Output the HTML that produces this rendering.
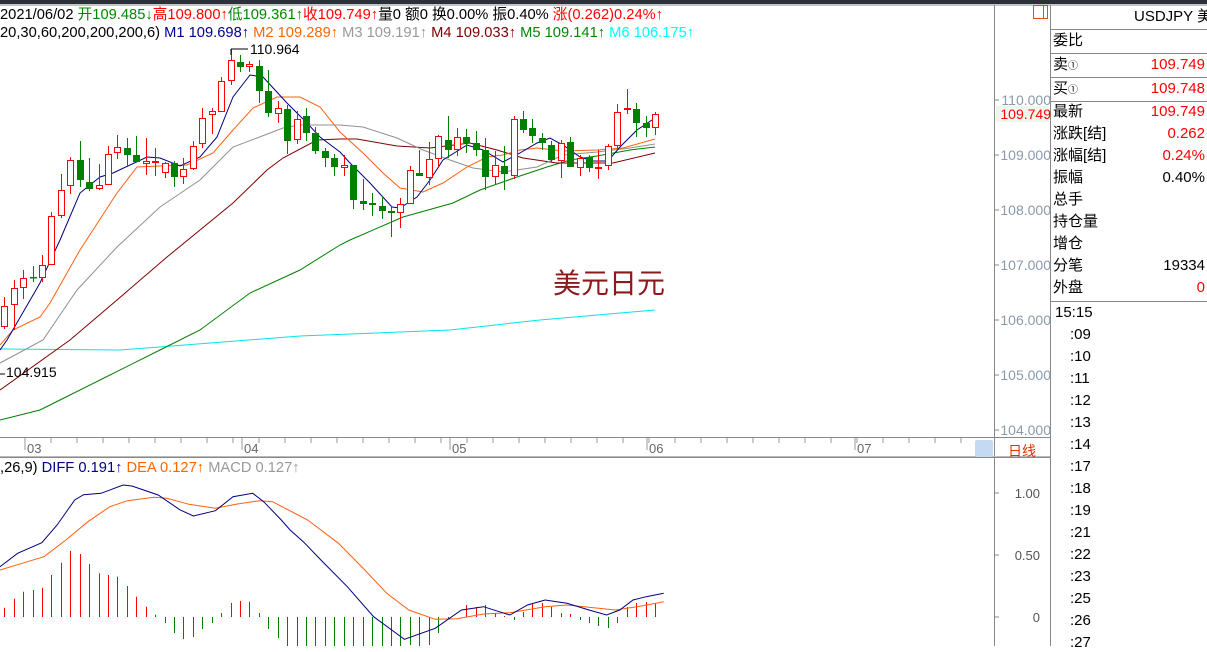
<!DOCTYPE html>
<html><head><meta charset="utf-8">
<style>
body{margin:0;width:1207px;height:646px;overflow:hidden;background:#fff;font-family:"Liberation Sans","Noto Sans CJK SC",sans-serif;position:relative}
.t{position:absolute;white-space:nowrap}
.r{color:#f00}.g{color:#080}.k{color:#000}
</style></head><body>
<div style="position:absolute;left:0;top:0;width:1207px;height:4px;background:#2c3038"></div>
<div class="t" style="left:0;top:6px;font-size:14.7px;line-height:18px"><span class="k">2021/06/02 </span><span class="g">开109.485↓</span><span class="r">高109.800↑</span><span class="g">低109.361↑</span><span class="r">收109.749↑</span><span class="k">量0 额0 换0.00% 振0.40% </span><span class="r">涨(0.262)0.24%↑</span></div>
<div class="t" style="left:0;top:24px;font-size:14.7px;line-height:18px"><span class="k">20,30,60,200,200,200,6) </span><span style="color:#00008b">M1 109.698↑ </span><span style="color:#f60">M2 109.289↑ </span><span style="color:#999">M3 109.191↑ </span><span style="color:#800000">M4 109.033↑ </span><span style="color:#080">M5 109.141↑ </span><span style="color:#0ff">M6 106.175↑</span></div>
<div class="t" style="left:0;top:459px;font-size:14.7px;line-height:18px"><span class="k">,26,9) </span><span style="color:#00008b">DIFF 0.191↑ </span><span style="color:#f60">DEA 0.127↑ </span><span style="color:#999">MACD 0.127↑</span></div>

<svg id="s" width="1207" height="646" style="position:absolute;left:0;top:0" xmlns="http://www.w3.org/2000/svg"></svg>

<div class="t" style="left:553px;top:262px;font-size:28px;color:#8b1a1a">美元日元</div>
<div class="t" style="left:250px;top:41px;font-size:14px">110.964</div>
<div class="t" style="left:6px;top:364px;font-size:14px">104.915</div>
<div class="t" style="left:1008px;top:441px;font-size:14px;color:#e03000">日线</div>

<div id="rp"></div>
<script>
var s=document.getElementById('s'),h='';
function L(x1,y1,x2,y2,c,w){h+='<line x1="'+x1+'" y1="'+y1+'" x2="'+x2+'" y2="'+y2+'" stroke="'+c+'" stroke-width="'+(w||1)+'"/>';}
function P(pts,c,w){h+='<polyline fill="none" stroke="'+c+'" stroke-width="'+(w||1)+'" points="'+pts.map(function(p){return p[0]+','+p[1]}).join(' ')+'"/>';}
L(0,5,1207,5,'#888');L(994.5,5,994.5,646,'#888');L(1050.5,5,1050.5,646,'#888');
L(0,437.5,1050,437.5,'#888');L(0,457.5,1050,457.5,'#888');L(0,456.5,1050,456.5,'#bbb');
h+='<rect x="975" y="440" width="18" height="17" rx="2" fill="#c4daf2"/>';
h+='<rect x="1033.5" y="5.5" width="14" height="13" fill="none" stroke="#e05010"/><line x1="1043.5" y1="5" x2="1043.5" y2="19" stroke="#e05010"/>';
var yl=[[100,'110.000'],[155,'109.000'],[210,'108.000'],[265,'107.000'],[320,'106.000'],[375,'105.000'],[430,'104.000']];
yl.forEach(function(a){L(995,a[0],999,a[0],'#888');h+='<text x="1051" y="'+(a[0]+5)+'" font-size="14" fill="#8a9aaa" text-anchor="end" font-family="Liberation Sans">'+a[1]+'</text>';});
h+='<rect x="996" y="106" width="53" height="16" fill="#eef6ee"/><text x="1051" y="119" font-size="14" fill="#f00" text-anchor="end" font-family="Liberation Sans">109.749</text>';
[[493,'1.00'],[555,'0.50'],[617,'0']].forEach(function(a){L(995,a[0],999,a[0],'#888');h+='<text x="1040" y="'+(a[0]+5)+'" font-size="13" fill="#555" text-anchor="end" font-family="Liberation Sans">'+a[1]+'</text>';});
for(var x=25;x<975;x+=26)L(x,438,x,443,'#999');
[[25,'03'],[242,'04'],[450,'05'],[647,'06'],[855,'07']].forEach(function(a){L(a[0],438,a[0],450,'#999');h+='<text x="'+(a[0]+2)+'" y="453" font-size="13" fill="#666" font-family="Liberation Sans">'+a[1]+'</text>';});
P([[0,349],[120,350],[300,336],[450,330],[540,320],[655,310]],'#00e5ee');
P([[0,420],[40,410],[60,400],[100,380],[160,350],[200,330],[250,293],[300,270],[340,245],[350,240],[403,217],[453,203],[480,190],[517,177],[547,167],[570,160],[597,156],[630,150],[655,147]],'#008000');
P([[0,390],[70,340],[117,300],[167,257],[233,203],[267,170],[283,158],[317,140],[340,139],[357,139],[397,146],[430,148],[470,143],[497,150],[523,158],[557,163],[583,163],[613,163],[655,153]],'#800000');
P([[0,363],[43,340],[77,290],[117,247],[160,207],[200,180],[233,147],[257,138],[283,128],[300,125],[340,125],[363,127],[397,138],[423,150],[450,160],[473,168],[503,172],[537,167],[563,155],[597,152],[630,148],[655,144]],'#909090');
P([[0,345],[13,330],[40,317],[50,303],[80,250],[117,193],[137,167],[160,166],[187,165],[213,153],[233,130],[253,108],[277,97],[300,97],[320,107],[340,132],[363,153],[383,173],[400,188],[423,192],[443,183],[467,167],[487,157],[503,155],[520,150],[537,148],[563,151],[597,150],[623,148],[655,139]],'#ff6010');
P([[0,350],[7,340],[40,283],[60,240],[80,193],[100,177],[113,173],[147,157],[160,158],[180,166],[200,157],[217,137],[233,97],[250,75],[263,77],[287,103],[307,123],[320,137],[340,152],[350,163],[370,183],[392,207],[400,208],[417,197],[430,180],[443,160],[467,145],[483,150],[503,162],[520,153],[537,143],[550,138],[563,145],[580,157],[593,161],[608,161],[620,147],[637,130],[655,118]],'#000080');
var C=[[306,326,297,329,1],[288,304,280,330,1],[278,287,270,299,1],[277,277,266,282,0],[265,277,255,282,1],[216,264,212,264,1],[190,215,174,218,1],[160,185,157,194,1],[160,180,141,187,0],[182,189,158,191,0],[185,188,164,190,1],[154,184,146,185,1],[147,152,135,159,1],[148,155,138,167,0],[155,162,136,162,0],[161,163,138,175,1],[162,162,148,176,1],[163,172,162,178,1],[163,177,161,187,0],[169,176,158,184,1],[146,168,141,170,1],[118,143,108,148,1],[111,114,108,134,1],[81,111,77,112,1],[60,80,49,85,1],[62,67,55,72,0],[64,66,61,72,1],[66,91,60,103,0],[91,113,70,117,0],[108,113,101,123,1],[109,141,105,154,0],[119,139,111,144,1],[116,133,108,141,0],[133,151,127,154,0],[151,158,148,167,0],[158,167,154,176,0],[165,167,155,176,1],[165,200,165,209,0],[201,204,179,210,0],[203,205,193,216,0],[206,211,196,219,0],[211,213,206,237,0],[204,212,198,228,1],[170,203,166,204,1],[173,176,150,176,0],[159,177,142,185,1],[136,158,135,167,1],[140,150,116,158,0],[137,149,128,156,1],[137,143,129,153,0],[143,150,131,156,0],[150,177,138,190,0],[165,176,151,184,1],[166,174,146,190,0],[119,175,116,179,1],[119,130,111,133,0],[128,136,119,143,0],[138,143,133,150,0],[145,160,141,162,0],[143,160,140,178,1],[142,167,137,167,0],[158,167,155,176,1],[157,168,155,172,0],[168,168,150,179,1],[146,165,144,170,1],[112,145,104,150,1],[109,109,89,114,1],[109,123,103,137,0],[123,128,116,137,0],[114,127,112,135,1]];
C.forEach(function(c,i){var x=Math.round(4.3+i*9.43)+0.5,col=c[4]?'#f00':'#008000';
 if(c[4]){L(x,c[2],x,c[0],col);L(x,c[1],x,c[3],col);if(c[1]-c[0]<2)L(x-3.5,c[0],x+3.5,c[0],col,2);else h+='<rect x="'+(x-3)+'" y="'+(c[0]+.5)+'" width="6" height="'+(c[1]-c[0])+'" fill="#fff" stroke="#f00"/>';}
 else{L(x,c[2],x,c[3],col);h+='<rect x="'+(x-3.5)+'" y="'+c[0]+'" width="7" height="'+Math.max(c[1]-c[0],1.5)+'" fill="#008000"/>';}});
L(231,49,248,49,'#000');L(231,49,231,55,'#000');L(0,374,5,374,'#000');
var B=[607.7,598.7,591.7,590,587.7,575,562.7,551,554,564,573.3,575,576.7,586,596.7,606.7,614.7,623,633,639,637,629,623,613,603,601,601.7,613,629,638,646,646,646,646,646,646,646,646,646,646,646,646,646,645,646,645,633,619,617,605,607,605,613,616,620,612,603,603,607,613,614,620,623,626,628,623,607,603,602,603];
var neg={17:1,18:1,19:1,20:1,21:1,22:1,54:1,61:1,62:1,63:1,64:1,65:1};for(var i=28;i<=48;i++)neg[i]=1;
B.forEach(function(y,i){var x=Math.round(4.3+i*9.43)+0.5;L(x,617,x,y,neg[i]?'#008000':'#f00');});
function cv(a){return a.map(function(p){return [(p[0]/2.275).toFixed(1),(460+p[1]/3).toFixed(1)]});}
P(cv([[0,330],[50,310],[100,290],[150,240],[200,185],[250,140],[290,122],[350,112],[380,115],[430,133],[490,145],[540,132],[590,122],[620,125],[700,180],[770,250],[830,330],[880,400],[930,450],[990,478],[1040,476],[1100,462],[1160,458],[1240,440],[1290,435],[1340,442],[1400,450],[1450,440],[1510,425]]),'#ff6010');
P(cv([[0,320],[40,280],[95,248],[130,195],[170,120],[190,104],[230,100],[280,75],[300,78],[360,105],[410,150],[440,168],[490,152],[530,110],[575,100],[600,125],[640,180],[660,210],[690,245],[730,300],[790,380],[850,470],[920,538],[990,505],[1050,450],[1100,440],[1160,465],[1200,435],[1240,420],[1290,430],[1340,450],[1380,465],[1410,450],[1440,420],[1470,410],[1510,400]]),'#000080');
[29,53,77,101,301].forEach(function(y){L(1051,y+.5,1207,y+.5,'#888');});
s.innerHTML=h;
var r='',F='font-size:15px;line-height:18px;';
r+='<div class="t" style="'+F+'left:1134px;top:8px">USDJPY 美</div>';
var rows=[['委比','',32,''],['卖<small style="font-size:10px">①</small>','109.749',56,'#f00'],['买<small style="font-size:10px">①</small>','109.748',80,'#f00'],['最新','109.749',103,'#f00'],['涨跌[结]','0.262',125,'#f00'],['涨幅[结]','0.24%',147,'#f00'],['振幅','0.40%',169,'#000'],['总手','',191,''],['持仓量','',213,''],['增仓','',235,''],['分笔','19334',257,'#000'],['外盘','0',279,'#f00']];
rows.forEach(function(a){r+='<div class="t" style="'+F+'left:1053px;top:'+a[2]+'px">'+a[0]+'</div><div class="t" style="'+F+'right:2px;top:'+a[2]+'px;color:'+a[3]+'">'+a[1]+'</div>';});
r+='<div class="t" style="'+F+'left:1055px;top:304px">15:15</div>';
[':09',':10',':11',':12',':13',':14',':17',':18',':19',':21',':22',':23',':25',':26',':27'].forEach(function(t,i){r+='<div class="t" style="'+F+'left:1070px;top:'+(326+i*22)+'px">'+t+'</div>';});
document.getElementById('rp').innerHTML=r;
</script>
</body></html>
